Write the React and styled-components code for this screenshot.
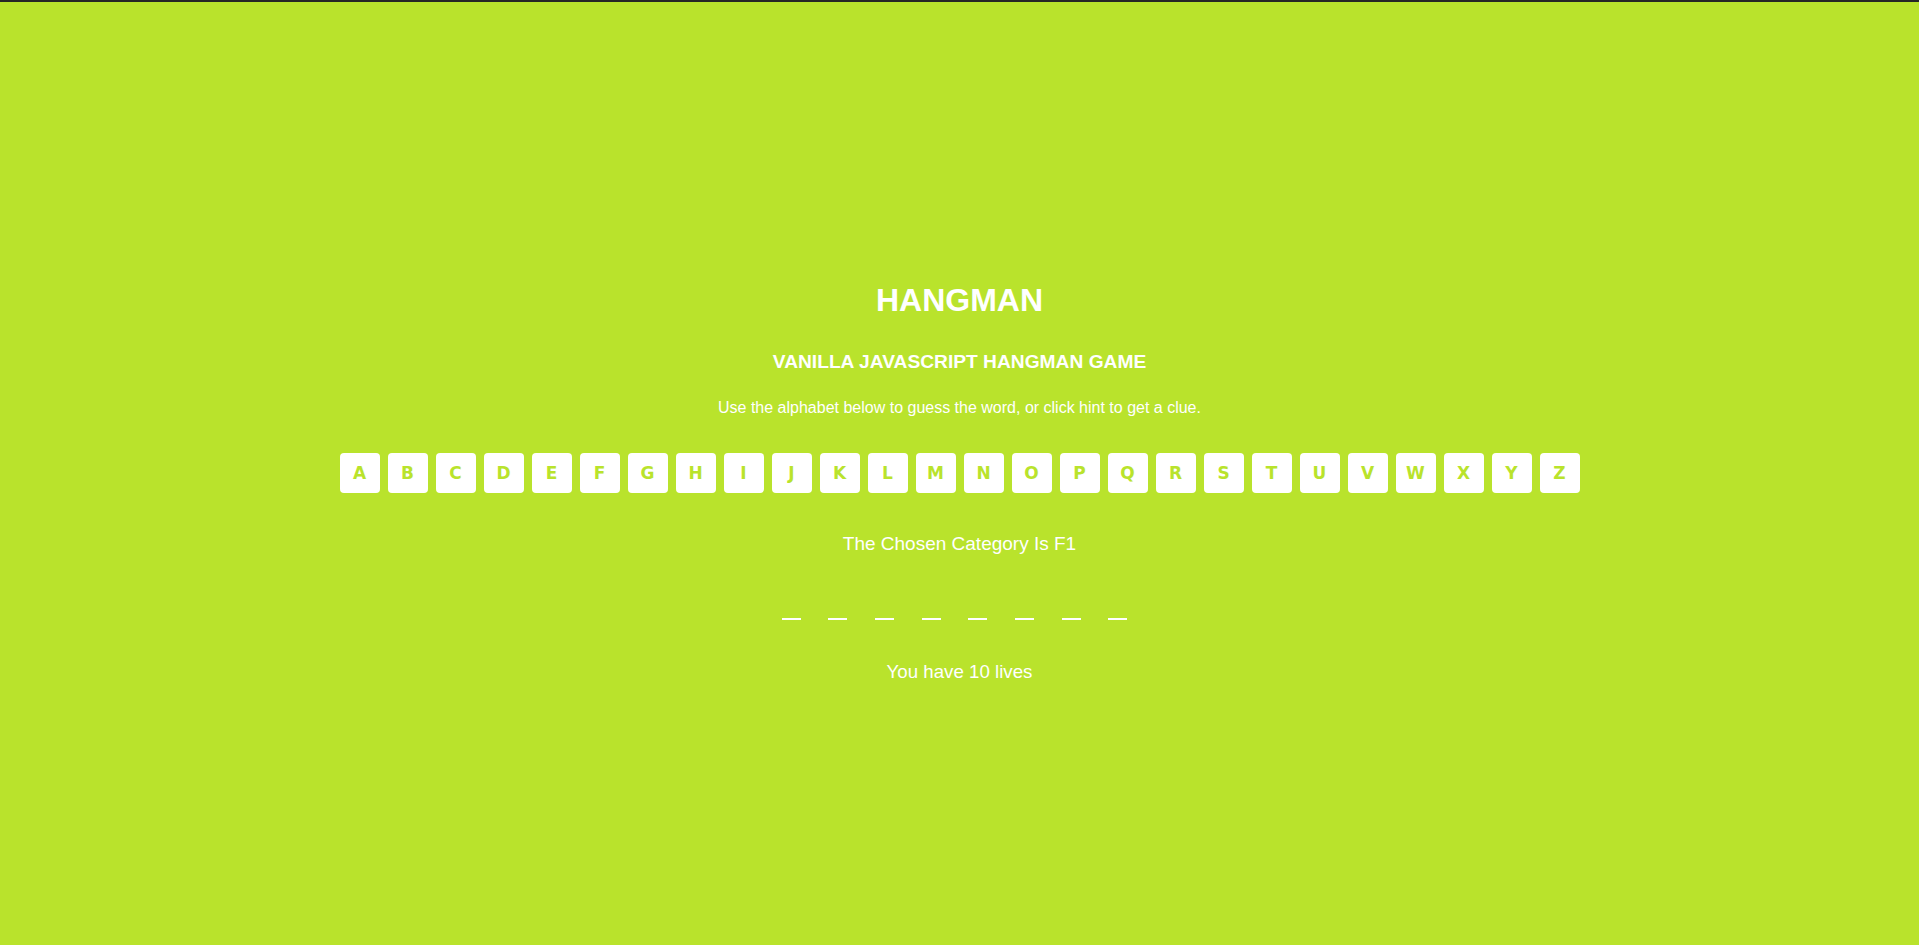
import React from "react";
import styled, { createGlobalStyle } from "styled-components";

const GREEN = "#b9e32c";

const GlobalStyle = createGlobalStyle`
  html, body {
    margin: 0;
    padding: 0;
    background: ${GREEN};
  }
  body {
    font-family: "Liberation Sans", Arial, sans-serif;
    color: #fff;
  }
`;

const Page = styled.div`
  min-height: 100vh;
  box-sizing: border-box;
  border-top: 2px solid #262626;
  padding-top: 280px;
  display: flex;
  flex-direction: column;
  align-items: center;
  text-align: center;
`;

const Title = styled.h1`
  margin: 0;
  font-size: 32px;
  font-weight: bold;
  line-height: normal;
`;

const Subtitle = styled.h3`
  margin: 32.4px 0 0;
  font-size: 19.2px;
  font-weight: bold;
  line-height: normal;
`;

const Text = styled.p`
  margin: ${(p) => p.$mt}px 0 0;
  font-size: ${(p) => p.$size}px;
  line-height: normal;
`;

const Alphabet = styled.ul`
  list-style: none;
  margin: 36px 0 0;
  padding: 0;
  display: flex;
  gap: 8px;
`;

const LetterButton = styled.li`
  width: 40px;
  height: 40px;
  border-radius: 4px;
  background: #fff;
  color: ${GREEN};
  display: flex;
  align-items: center;
  justify-content: center;
  font-family: "DejaVu Sans", Verdana, sans-serif;
  font-weight: bold;
  font-size: 17px;
  cursor: pointer;
`;

const Word = styled.ul`
  list-style: none;
  margin: 63px 0 0;
  padding: 0 10px 0 0;
  display: flex;
  gap: 27.7px;
`;

const Slot = styled.li`
  width: 19px;
  height: 2px;
  background: #fff;
`;

const letters = "ABCDEFGHIJKLMNOPQRSTUVWXYZ".split("");

export default function App() {
  return (
    <>
      <GlobalStyle />
      <Page>
        <Title>HANGMAN</Title>
        <Subtitle>VANILLA JAVASCRIPT HANGMAN GAME</Subtitle>
        <Text $mt={26} $size={16}>
          Use the alphabet below to guess the word, or click hint to get a clue.
        </Text>
        <Alphabet>
          {letters.map((l) => (
            <LetterButton key={l}>{l}</LetterButton>
          ))}
        </Alphabet>
        <Text $mt={39.5} $size={19}>The Chosen Category Is F1</Text>
        <Word>
          {Array.from({ length: 8 }).map((_, i) => (
            <Slot key={i} />
          ))}
        </Word>
        <Text $mt={41} $size={18.72}>You have 10 lives</Text>
      </Page>
    </>
  );
}
